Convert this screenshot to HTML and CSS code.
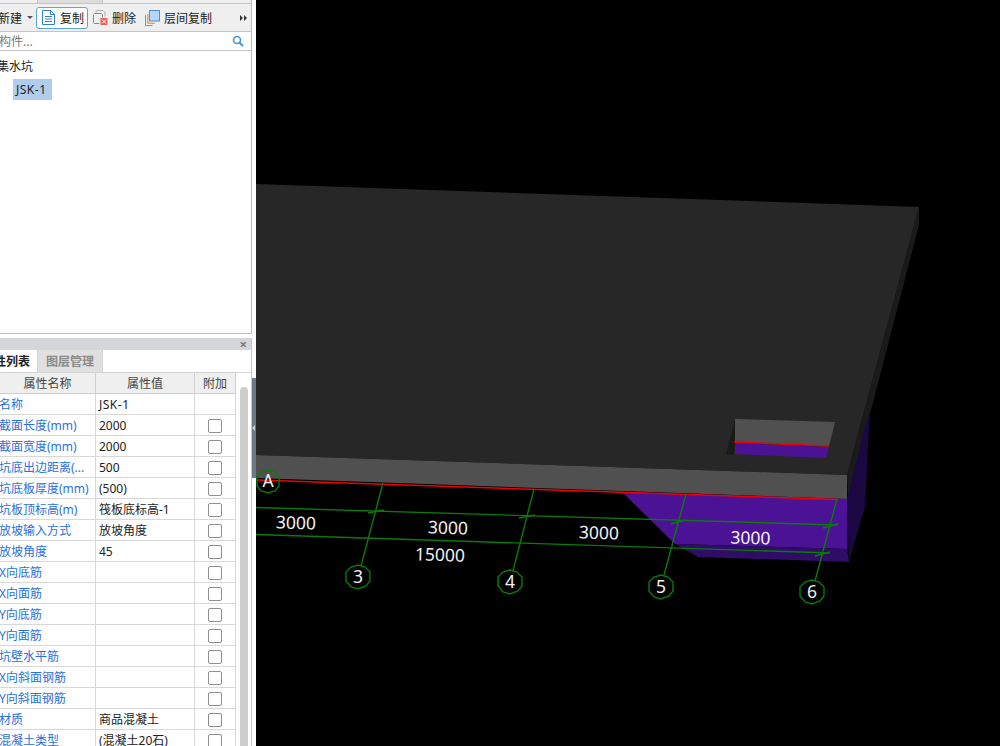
FILE: index.html
```html
<!DOCTYPE html>
<html lang="zh">
<head>
<meta charset="utf-8">
<title>集水坑</title>
<link rel="stylesheet" href="styles.css">
</head>
<body>
<div class="app">
  <aside class="side">
    <section class="panel-top">
      <div class="strip"><span class="strip-tab"></span></div>
      <div class="toolbar">
        <span class="tb-new">新建</span>
        <svg class="caret" width="6" height="4" viewBox="0 0 6 4"><path d="M0 0h6L3 3z" fill="#555"/></svg>
        <button class="tb-btn active">
          <svg width="13" height="15" viewBox="0 0 13 15"><path d="M.5.5h8l4 4v10H.5z" fill="#fff" stroke="#2f7fd0"/><path d="M8.500.5v4h4M3 6.500h7M3 9h7M3 11.500h7" fill="none" stroke="#2f7fd0"/></svg>
          <span>复制</span>
        </button>
        <button class="tb-btn">
          <svg width="15" height="15" viewBox="0 0 15 15"><path d="M3 3.500V1.500q0-1 1-1h6l2 2v4" fill="none" stroke="#aaa"/><path d="M1.500 3.500h7l1 1v3M.5 4.500v8q0 1 1 1h5" fill="none" stroke="#888"/><rect x="7.500" y="8" width="7" height="7" fill="#e8615a"/><path d="M9.200 9.700l3.600 3.600M12.800 9.700l-3.600 3.600" stroke="#fff"/></svg>
          <span>删除</span>
        </button>
        <button class="tb-btn">
          <svg width="15" height="16" viewBox="0 0 15 16"><path d="M.5 5v10.500h7M2.800 4v9.200h7" fill="none" stroke="#e8772e"/><rect x="4.500" y=".5" width="10" height="10.500" fill="#b5d5fa" stroke="#4a90d9"/></svg>
          <span>层间复制</span>
        </button>
        <svg class="more" width="7" height="6" viewBox="0 0 7 6"><path d="M0 0l3 3-3 3zM4 0l3 3-3 3z" fill="#333"/></svg>
      </div>
      <div class="search">
        <span>构件...</span>
        <svg width="12" height="12" viewBox="0 0 12 12"><circle cx="5" cy="5" r="3.500" fill="none" stroke="#3e97d1" stroke-width="1.600"/><path d="M7.500 7.500L11 11" stroke="#3e97d1" stroke-width="2"/></svg>
      </div>
      <div class="tree">
        <div class="tree-root">集水坑</div>
        <div class="tree-leaf"><span class="wide">JSK-1</span></div>
      </div>
    </section>
    <section class="panel-bottom">
      <div class="dock-head"><span class="close">×</span></div>
      <div class="tabs">
        <span class="tab current">属性列表</span>
        <span class="tab">图层管理</span>
      </div>
      <div class="grid-wrap">
        <table class="props">
          <colgroup><col class="c1"><col class="c2"><col class="c3"></colgroup>
          <thead><tr><th>属性名称</th><th>属性值</th><th>附加</th></tr></thead>
          <tbody>
            <tr><td class="k">名称</td><td class="wide">JSK-1</td><td></td></tr>
            <tr><td class="k">截面长度(mm)</td><td>2000</td><td class="c"><i></i></td></tr>
            <tr><td class="k">截面宽度(mm)</td><td>2000</td><td class="c"><i></i></td></tr>
            <tr><td class="k">坑底出边距离(...</td><td>500</td><td class="c"><i></i></td></tr>
            <tr><td class="k">坑底板厚度(mm)</td><td>(500)</td><td class="c"><i></i></td></tr>
            <tr><td class="k">坑板顶标高(m)</td><td>筏板底标高-1</td><td class="c"><i></i></td></tr>
            <tr><td class="k">放坡输入方式</td><td>放坡角度</td><td class="c"><i></i></td></tr>
            <tr><td class="k">放坡角度</td><td>45</td><td class="c"><i></i></td></tr>
            <tr><td class="k">X向底筋</td><td></td><td class="c"><i></i></td></tr>
            <tr><td class="k">X向面筋</td><td></td><td class="c"><i></i></td></tr>
            <tr><td class="k">Y向底筋</td><td></td><td class="c"><i></i></td></tr>
            <tr><td class="k">Y向面筋</td><td></td><td class="c"><i></i></td></tr>
            <tr><td class="k">坑壁水平筋</td><td></td><td class="c"><i></i></td></tr>
            <tr><td class="k">X向斜面钢筋</td><td></td><td class="c"><i></i></td></tr>
            <tr><td class="k">Y向斜面钢筋</td><td></td><td class="c"><i></i></td></tr>
            <tr><td class="k">材质</td><td>商品混凝土</td><td class="c"><i></i></td></tr>
            <tr><td class="k">混凝土类型</td><td>(混凝土20石)</td><td class="c"><i></i></td></tr>
          </tbody>
        </table>
        <div class="scroll"><span class="thumb"></span></div>
      </div>
    </section>
  </aside>
  <div class="splitter"><span class="grip"></span></div>
  <main class="view">
    <svg class="scene" width="744" height="746" viewBox="256 0 744 746">
      <polygon class="s-side" points="919,207 919,225 848,499 847,475"/>
      <polygon class="s-top" points="256,184 919,207 847,475 256,455"/>
      <polygon class="s-sideup" points="870,408 865,507 849,562 847,499"/>
      <polygon class="s-pit" points="622,492 847,499 847,549 675,544"/>
      <polygon class="s-pitlow" points="675,544 847,549 849,562 698,557"/>
      <polygon class="s-front" points="256,455 847,475 847,499 256,478"/>
      <polygon class="s-hole" points="735,419 726,454 734,455 735,443"/>
      <polygon class="s-front" points="735,419 835,422 829,446 735,442"/>
      <polygon class="s-pit" points="735,443 829,447 826,458 735,454"/>
      <line class="red" x1="734" y1="442" x2="829" y2="446"/>
      <line class="red" x1="257" y1="480" x2="838" y2="499.500"/>
      <g class="axis">
        <polyline points="256,507.500 837,525"/>
        <polyline points="256,534.500 830,553"/>
        <polyline points="383,483 361,566"/>
        <polyline points="534,489 513,571"/>
        <polyline points="686,494 664,575"/>
        <polyline points="837,499 815,581"/>
        <polyline points="368,513 384,510"/>
        <polyline points="519,518 535,515"/>
        <polyline points="671,524 686,520"/>
        <polyline points="823,528 838,524"/>
        <polyline points="815,556 830,552"/>
        <polygon points="358,565 365,567 370,572 370,581 366,586 358,589 351,587 346,581 346,572 351,567"/>
        <polygon points="510,570 517,572 522,577 522,586 518,591 510,594 503,592 498,586 498,577 503,572"/>
        <polygon points="661,575 668,577 673,582 673,591 669,596 661,599 654,597 649,591 649,582 654,577"/>
        <polygon points="812,580 819,582 824,587 824,596 820,601 812,604 805,602 800,596 800,587 805,582"/>
        <polygon points="268,470 275,472 279,477 279,486 275,491 268,493 261,491 257,486 257,477 261,472"/>
      </g>
      <g class="labels">
        <text x="296" y="529" transform="rotate(1.800 296 523)">3000</text>
        <text x="448" y="534" transform="rotate(1.800 448 528)">3000</text>
        <text x="599" y="539" transform="rotate(1.800 599 533)">3000</text>
        <text x="750.500" y="544" transform="rotate(1.800 750 538)">3000</text>
        <text x="440" y="561" transform="rotate(1.800 440 555)">15000</text>
        <text x="358" y="583">3</text>
        <text x="510" y="588">4</text>
        <text x="661" y="593">5</text>
        <text x="812" y="598">6</text>
        <text x="268" y="487">A</text>
      </g>
    </svg>
  </main>
</div>
</body>
</html>
```
FILE: styles.css
```css
* { box-sizing: border-box; }
html, body { margin: 0; height: 100%; overflow: hidden; }
body { font: 12px "Noto Sans", "Noto Sans CJK SC", sans-serif; color: #222; background: #000; }
.app { display: flex; width: 1000px; height: 746px; }
.side { width: 252px; flex: none; background: #fff; display: flex; flex-direction: column; overflow: hidden; }
.panel-top { height: 334px; flex: none; display: flex; flex-direction: column; border-right: 1px solid #bdbdbd; border-bottom: 1px solid #bdbdbd; }
.strip { height: 4px; flex: none; background: #efefef; border-bottom: 1px solid #c4c4c4; padding-left: 37px; }
.strip-tab { display: block; width: 66px; height: 3px; background: #dcdcdc; border: solid #c4c4c4; border-width: 0 1px; }
.toolbar { height: 28px; flex: none; display: flex; align-items: center; background: #efefef; border-bottom: 1px solid #c4c4c4; }
.tb-new { margin-left: -2px; width: 27px; }
.caret { margin-left: 2px; margin-right: 3px; }
.tb-btn { display: flex; align-items: center; gap: 4px; height: 22px; padding: 0 3px 0 4px; margin: 0; border: 1px solid transparent; background: none; font: inherit; color: #222; border-radius: 3px; }
.tb-btn.active { gap: 5px; padding-left: 5px; border-color: #5aa5e6; background: #fff; }
.more { margin-left: auto; margin-right: 4px; }
.search { height: 19px; flex: none; display: flex; align-items: center; justify-content: space-between; padding: 0 7px 0 0; color: #777; border-bottom: 1px solid #c4c4c4; }
.search span { margin-left: -1px; }
.tree { flex: 1; }
.tree-root { margin: 5px 0 0 -3px; height: 24px; line-height: 21px; }
.tree-leaf { padding-left: 13px; }
.tree-leaf span { display: inline-block; height: 21px; line-height: 21px; padding: 0 5px 0 3px; background: #b0cdee; margin-top: -1px; }
.wide { letter-spacing: .5px; }
.panel-bottom { flex: 1; margin-top: 4px; display: flex; flex-direction: column; min-height: 0; border-right: 1px solid #c4c4c4; }
.dock-head { height: 12px; flex: none; background: #d5d6da; display: flex; justify-content: flex-end; align-items: center; padding-right: 4px; }
.close { font-size: 13px; line-height: 12px; color: #777; font-weight: 700; }
.tabs { height: 23px; flex: none; display: flex; margin-left: -13px; border-bottom: 1px solid #d4d4d4; }
.tab { display: flex; align-items: center; background: #e0e0e0; color: #8a8a8a; font-weight: 700; width: 66px; justify-content: center; white-space: nowrap; border-left: 1px solid #d4d4d4; border-right: 1px solid #d4d4d4; }
.tab.current { background: #fff; color: #222; width: 50px; justify-content: flex-end; padding-right: 7px; border: 0; }
.grid-wrap { flex: 1; display: flex; min-height: 0; overflow: hidden; }
.props { width: 236px; flex: none; table-layout: fixed; border-collapse: separate; border-spacing: 0; height: fit-content; }
.c1 { width: 96px; }
.c2 { width: 99px; }
.c3 { width: 41px; }
.props th, .props td { height: 21px; padding: 0 0 0 3px; border: 1px solid #d8d8d8; border-width: 0 1px 1px 0; white-space: nowrap; overflow: hidden; font-weight: 400; }
.props th { background: #efefef; text-align: center; color: #444; border-color: #cfcfcf; padding: 0; }
.props .k { color: #2b6fe0; padding: 0; text-indent: -1px; }
.props .c { padding: 0 1px 1px 0; text-align: center; }
.props .c i { display: inline-block; width: 14px; height: 14px; border: 1px solid #8f8f8f; border-radius: 2px; vertical-align: middle; background: #fff; }
.scroll { flex: 1; padding: 14px 3px 0 4px; }
.thumb { display: block; height: 400px; background: #cdcdcd; border-radius: 4px 4px 0 0; }
.splitter { width: 4px; flex: none; background: #fff; display: flex; flex-direction: column; }
.grip { display: block; margin-top: 378px; height: 100px; background: #6c7884; position: relative; }
.grip::after { content: ""; position: absolute; left: 0; top: 47px; border: 3px solid transparent; border-right-color: #c8ccd2; border-left-width: 0; }
.view { flex: 1; background: #000; min-width: 0; }
.scene { display: block; }
.s-top { fill: #272727; }
.s-side { fill: #1a1a1a; }
.s-front { fill: #505050; }
.s-hole { fill: #1a1a1a; }
.s-pit { fill: #4b1296; }
.s-pitlow { fill: #2f0c66; }
.s-sideup { fill: #1b0742; }
.red { stroke: #f00000; stroke-width: 1.500; }
.axis polyline, .axis polygon { fill: none; stroke: #0b7a0b; stroke-width: 1.400; }
.labels text { font: 17.5px "Noto Sans", sans-serif; fill: #f2f2f2; text-anchor: middle; }
```
